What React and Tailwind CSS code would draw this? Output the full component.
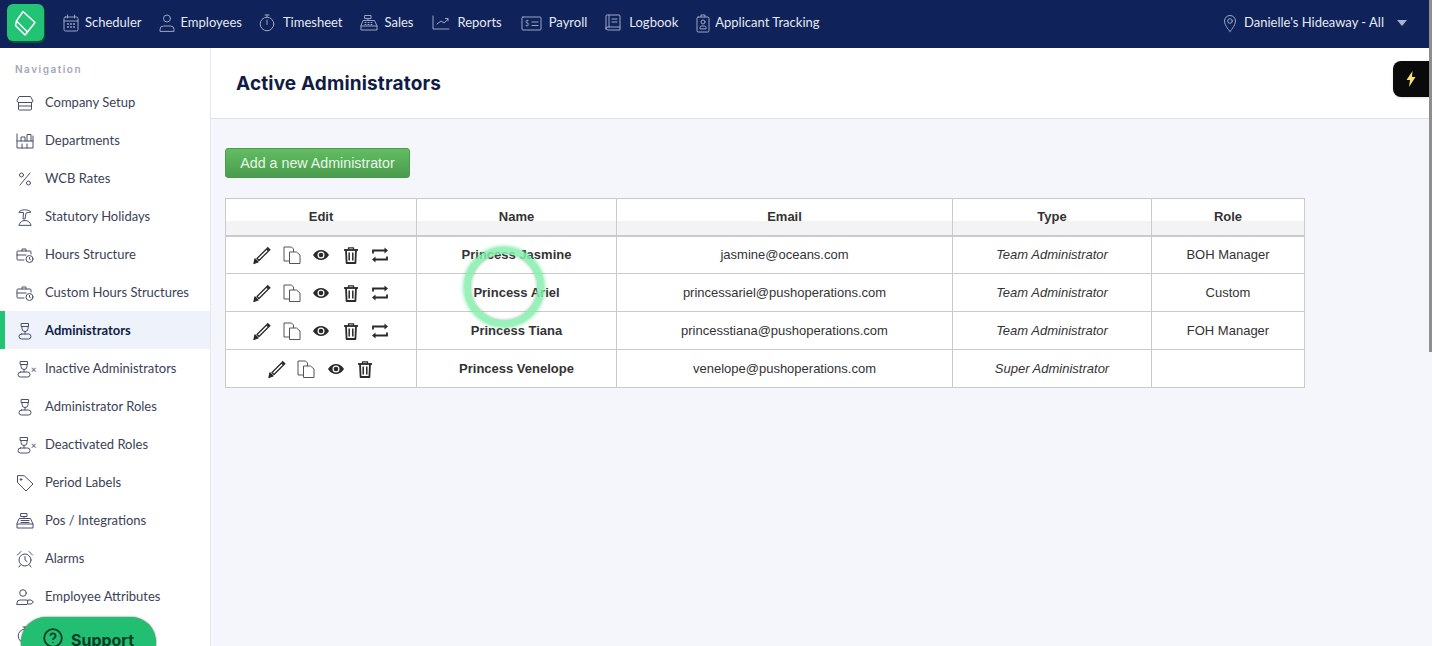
import React from 'react';

const Stroke = ({ children, className = '', w = 20, h = 20, vb = '0 0 20 20', sw = 1 }) => (
  <svg width={w} height={h} viewBox={vb} fill="none" stroke="currentColor" strokeWidth={sw} strokeLinecap="round" strokeLinejoin="round" className={className}>
    {children}
  </svg>
);

const CalendarIcon = () => (
  <Stroke>
    <rect x="3" y="4" width="14" height="14" rx="1.500" />
    <path d="M3 8h14M6.500 2v3M13.500 2v3" />
    <path d="M6.500 11h1M9.500 11h1M12.500 11h1M6.500 14h1M9.500 14h1M12.500 14h1" strokeWidth="1.300" />
  </Stroke>
);
const PersonIcon = () => (
  <Stroke>
    <circle cx="10" cy="5.500" r="3.500" />
    <path d="M3 18v-1.500a3.500 3.500 0 0 1 3.500-3.500h7a3.500 3.500 0 0 1 3.500 3.500V18z" />
  </Stroke>
);
const TimerIcon = () => (
  <Stroke>
    <circle cx="10" cy="11" r="6.800" />
    <path d="M10 7v4.500M8 2h4M10 2v2" />
  </Stroke>
);
const RegisterIcon = () => (
  <Stroke>
    <path d="M6 2.500h6v3H6zM9 5.500v2M4.500 7.500h11L18 13v4H2v-4z" />
    <path d="M2 13h16M6 9.500h1M9 9.500h1M12 9.500h1M6 11.500h1M9 11.500h1M12 11.500h1" />
  </Stroke>
);
const ChartIcon = () => (
  <Stroke>
    <path d="M2 3v13h16M6 11l4-3 3 2 4-4M14.500 5.500H17V8" />
  </Stroke>
);
const ChequeIcon = () => (
  <Stroke w={21} vb="0 0 21 20">
    <rect x="1" y="4" width="19" height="13" rx="1" />
    <path d="M11 9h6M11 12.500h6" />
    <text x="4" y="13" fontSize="7" fill="currentColor" stroke="none" fontFamily="Lato">$</text>
  </Stroke>
);
const BookIcon = () => (
  <Stroke>
    <path d="M3 16V3a1 1 0 0 1 1-1h12a1 1 0 0 1 1 1v14H5a2 2 0 0 1-2-2zM6 2v12M3 15a1.500 1.500 0 0 1 2-1h12" />
    <path d="M9 6h5M9 9h5" />
  </Stroke>
);
const ClipboardIcon = () => (
  <Stroke>
    <rect x="4" y="4" width="12" height="15" rx="1.200" />
    <path d="M8 4V2h4v2" />
    <circle cx="10" cy="9" r="2" />
    <path d="M7 15.500v-1a1.500 1.500 0 0 1 1.500-1.500h3a1.500 1.500 0 0 1 1.500 1.500v1z" />
  </Stroke>
);
const PinIcon = () => (
  <Stroke>
    <path d="M10 18.500S4.500 12.500 4.500 8a5.500 5.500 0 0 1 11 0c0 4.500-5.500 10.500-5.500 10.500z" />
    <circle cx="10" cy="8" r="2.300" />
  </Stroke>
);

const StoreIcon = () => (
  <Stroke>
    <path d="M4.500 3.500h11L18 8a2 2 0 0 1-2 1.500H4A2 2 0 0 1 2 8z" />
    <path d="M3.500 9.500V16a1 1 0 0 0 1 1h11a1 1 0 0 0 1-1V9.500M3.500 13h13" />
  </Stroke>
);
const DeptIcon = () => (
  <Stroke>
    <path d="M2 3v14h16V5M2 10h16M6 10V6h4v4M12 10V3.500h4V10M7 17v-4M12 17v-4" />
  </Stroke>
);
const PercentIcon = () => (
  <Stroke>
    <path d="M15 4L5 16" />
    <circle cx="6.500" cy="6" r="2" />
    <circle cx="13.500" cy="14" r="2" />
  </Stroke>
);
const BeachIcon = () => (
  <Stroke>
    <path d="M4 5c2-3 9-3 12 0l-5 1-1 6H8l.5-6zM4 18c1-3 3-4.500 6-4.500s5 1.500 6 4.500z" />
  </Stroke>
);
const BriefcaseClock = () => (
  <Stroke>
    <path d="M9 15H3a1 1 0 0 1-1-1V7a1 1 0 0 1 1-1h12a1 1 0 0 1 1 1v2M7 6V4h4v2M2 10h9" />
    <circle cx="14.500" cy="14" r="3.500" />
    <path d="M14.500 12.300V14l1 1" />
  </Stroke>
);
const AdminIcon = () => (
  <Stroke>
    <path d="M6.500 2.500h7v3h-7zM7 5.500v2a3 3 0 0 0 6 0v-2" />
    <rect x="4" y="13" width="12" height="5" rx="2.500" />
    <path d="M10 10.500V13" />
  </Stroke>
);
const AdminX = () => (
  <div className="relative -ml-[3px] h-[20px] w-[20px]">
    <AdminIcon />
    <span className="absolute -right-[3px] top-[5px] text-[10px] leading-none">×</span>
  </div>
);
const TagIcon = () => (
  <Stroke>
    <path d="M2.500 3v6.500L11 18l7-7-8.500-8z" />
    <circle cx="6" cy="6.500" r="0.800" fill="currentColor" />
  </Stroke>
);
const AlarmIcon = () => (
  <Stroke>
    <circle cx="10" cy="11" r="6" />
    <path d="M10 7.500V11l2 1.500M2.500 6L6 2.500M17.500 6L14 2.500M5.500 16l-1.500 2M14.500 16l1.500 2" />
  </Stroke>
);
const AttrIcon = () => (
  <Stroke>
    <circle cx="8" cy="6" r="3.300" />
    <path d="M2 17.500V16a3 3 0 0 1 3-3h6l2 .5M2 17.500h10" />
    <path d="M13 13h3l2.500 2-2.500 2h-3z" />
  </Stroke>
);
const PosIcon = () => (
  <Stroke>
    <path d="M6 2.500h6v3H6zM9 5.500v2M4.500 7.500h11L18 13v4H2v-4z" />
    <path d="M2 13h16M6 9.500h8M6 11.500h8" />
  </Stroke>
);

// row action icons
const PencilIcon = () => (
  <svg width="20" height="20" viewBox="0 0 20 20" fill="none" stroke="#2a2a2a" strokeWidth="1.300" strokeLinejoin="round">
    <path d="M5 13.500L14.500 4l2 2L7 15.500z" />
    <path d="M15 2.500l3 3" strokeWidth="2" />
    <path d="M2 18.500l1-4.500 3 3z" fill="#2a2a2a" />
  </svg>
);
const CopyIcon = () => (
  <svg width="20" height="20" viewBox="0 0 20 20" fill="#ffffff" stroke="#555555" strokeWidth="1" strokeLinejoin="round">
    <path d="M2 2h7.500l2 2v12H2z" />
    <path d="M7.500 7h7l3.500 3v8.500H7.500z" />
  </svg>
);
const EyeIcon = () => (
  <svg width="20" height="20" viewBox="0 0 20 20">
    <path d="M2 10c2-3.500 5-5 8-5s6 1.500 8 5c-2 3.500-5 5-8 5s-6-1.500-8-5z" fill="#2a2a2a" />
    <circle cx="10" cy="10" r="3.500" fill="#ffffff" />
    <circle cx="10" cy="10" r="2.300" fill="#2a2a2a" />
  </svg>
);
const TrashIcon = () => (
  <svg width="20" height="20" viewBox="0 0 20 20" fill="none" stroke="#2a2a2a" strokeWidth="1.800" strokeLinejoin="round">
    <path d="M3 5h14" />
    <path d="M7.500 5V2.800h5V5" strokeWidth="1.300" />
    <path d="M5 5l.6 13h8.800L15 5" />
    <path d="M8.200 7.500v8M11.800 7.500v8" strokeWidth="1.500" />
  </svg>
);
const SwapIcon = () => (
  <svg width="20" height="20" viewBox="0 0 20 20" fill="none" stroke="#2a2a2a" strokeWidth="1.800">
    <path d="M3 8.500V5.500h12" />
    <path d="M14.500 2.500L18 5.500l-3.500 3z" fill="#2a2a2a" stroke="none" />
    <path d="M17 11.500v3H5" />
    <path d="M5.500 11.500L2 14.500l3.500 3z" fill="#2a2a2a" stroke="none" />
  </svg>
);

const topLinks = [
  { label: 'Scheduler', Icon: CalendarIcon, link: 'gap-[4px] mr-[15px]' },
  { label: 'Employees', Icon: PersonIcon, link: 'gap-[4px] mr-[15px]' },
  { label: 'Timesheet', Icon: TimerIcon, link: 'gap-[6px] mr-[16px]' },
  { label: 'Sales', Icon: RegisterIcon, link: 'gap-[6px] mr-[18px]' },
  { label: 'Reports', Icon: ChartIcon, link: 'gap-[6px] mr-[19px]' },
  { label: 'Payroll', Icon: ChequeIcon, link: 'gap-[7px] mr-[16px]' },
  { label: 'Logbook', Icon: BookIcon, link: 'gap-[6px] mr-[15px]' },
  { label: 'Applicant Tracking', Icon: ClipboardIcon, link: 'gap-[2px]' },
];

const sideLinks = [
  { label: 'Company Setup', Icon: StoreIcon },
  { label: 'Departments', Icon: DeptIcon },
  { label: 'WCB Rates', Icon: PercentIcon },
  { label: 'Statutory Holidays', Icon: BeachIcon },
  { label: 'Hours Structure', Icon: BriefcaseClock },
  { label: 'Custom Hours Structures', Icon: BriefcaseClock },
  { label: 'Administrators', Icon: AdminIcon, active: true },
  { label: 'Inactive Administrators', Icon: AdminX },
  { label: 'Administrator Roles', Icon: AdminIcon },
  { label: 'Deactivated Roles', Icon: AdminX },
  { label: 'Period Labels', Icon: TagIcon },
  { label: 'Pos / Integrations', Icon: PosIcon },
  { label: 'Alarms', Icon: AlarmIcon },
  { label: 'Employee Attributes', Icon: AttrIcon },
  { label: '', Icon: TimerIcon },
];

const admins = [
  { name: 'Princess Jasmine', email: 'jasmine@oceans.com', type: 'Team Administrator', role: 'BOH Manager', swap: true },
  { name: 'Princess Ariel', email: 'princessariel@pushoperations.com', type: 'Team Administrator', role: 'Custom', swap: true },
  { name: 'Princess Tiana', email: 'princesstiana@pushoperations.com', type: 'Team Administrator', role: 'FOH Manager', swap: true },
  { name: 'Princess Venelope', email: 'venelope@pushoperations.com', type: 'Super Administrator', role: '', swap: false },
];

const cell = 'border border-[#c9cacd] p-0 text-center';

const App = () => {
  return (
    <div className="relative h-[646px] w-[1432px] overflow-hidden bg-white font-['Lato',sans-serif]">
      <header className="flex h-[48px] items-center bg-[#0f2259] pb-[3px] text-[13px] text-[#e6e9f2]">
        <div className="ml-[7px] mr-[17px] h-[37px] w-[37px] rounded-[6px] bg-[#22c375] shadow-[1px_2px_0_#0b5a30]">
          <svg width="37" height="37" viewBox="0 0 37 37" fill="none" stroke="#ffffff" strokeWidth="1.500" strokeLinejoin="round">
            <path d="M9.500 17L16 7.500 28 18.500 20.500 28z" />
            <path d="M9.500 17L8.500 21.500 18 31 20.500 28" />
          </svg>
        </div>
        {topLinks.map(({ label, Icon, link }) => (
          <a key={label} className={`flex items-center ${link}`}>
            <span className="text-[#9aa6c6]"><Icon /></span>
            <span className="whitespace-nowrap">{label}</span>
          </a>
        ))}
        <div className="ml-auto mr-[25px] flex items-center">
          <span className="mr-[4px] text-[#9aa6c6]"><PinIcon /></span>
          <span className="whitespace-nowrap">Danielle's Hideaway - All</span>
          <span className="ml-[13px] h-0 w-0 border-x-[5px] border-t-[6px] border-x-transparent border-t-[#aab4d0]" />
        </div>
      </header>

      <div className="flex h-[598px]">
        <aside className="h-full w-[211px] shrink-0 overflow-hidden border-r border-[#e6e7ee] bg-white">
          <div className="pl-[15px] pt-[15px] pb-[8px] font-['Inter',sans-serif] text-[10px] font-semibold leading-[12px] tracking-[1.500px] text-[#a4a8b5]">
            Navigation
          </div>
          {sideLinks.map(({ label, Icon, active }, i) => (
            <div
              key={i}
              className={`flex h-[38px] items-center border-l-[5px] pl-[10px] pt-[2px] text-[13px] ${active ? 'border-[#22c375] bg-[#edf2fb] font-bold text-[#111c44]' : 'border-transparent text-[#3a4256]'}`}
            >
              <span className="mr-[10px] flex w-[20px] justify-center text-[#4a5068]"><Icon /></span>
              {label && <span className="whitespace-nowrap">{label}</span>}
            </div>
          ))}
        </aside>

        <main className="min-w-0 flex-1 bg-[#f5f6fb]">
          <div className="flex h-[71px] items-center border-b border-[#e1e2e8] bg-white pl-[25px]">
            <h1 className="mt-[2px] font-['Inter',sans-serif] text-[19px] font-bold tracking-[0.150px] text-[#111c44]">Active Administrators</h1>
          </div>
          <div className="pl-[14px] pt-[29px] font-['Liberation_Sans',sans-serif] text-[13px] text-[#333333]">
            <button className="flex h-[30px] w-[185px] items-center justify-center rounded-[3px] border border-[#4d9a4d] bg-gradient-to-b from-[#62bd62] to-[#4a9c4d] pt-[2px] text-[14.250px] text-[#e8f5e8]">
              Add a new Administrator
            </button>
            <table className="mt-[20px] w-[1079px] table-fixed border-collapse">
              <colgroup>
                <col className="w-[191px]" />
                <col className="w-[200px]" />
                <col className="w-[336px]" />
                <col className="w-[199px]" />
                <col className="w-[153px]" />
              </colgroup>
              <thead>
                <tr className="h-[37px] bg-[linear-gradient(#ffffff_0,#ffffff_22px,#f3f3f3_22px)]">
                  {['Edit', 'Name', 'Email', 'Type', 'Role'].map((h) => (
                    <th key={h} className={`${cell} border-b-2 font-bold`}>{h}</th>
                  ))}
                </tr>
              </thead>
              <tbody className="bg-white">
                {admins.map((a) => (
                  <tr key={a.name} className="h-[38px]">
                    <td className={cell}>
                      <div className="flex items-center justify-center gap-[9.500px]">
                        <PencilIcon />
                        <CopyIcon />
                        <EyeIcon />
                        <TrashIcon />
                        {a.swap && <SwapIcon />}
                      </div>
                    </td>
                    <td className={`${cell} font-bold`}>{a.name}</td>
                    <td className={cell}>{a.email}</td>
                    <td className={`${cell} italic`}>{a.type}</td>
                    <td className={cell}>{a.role}</td>
                  </tr>
                ))}
              </tbody>
            </table>
          </div>
        </main>
      </div>

      {/* click highlight */}
      <div className="absolute left-[464px] top-[247px] h-[80px] w-[80px] rounded-full border-[7px] border-[#86efac]/85 shadow-[0_0_4px_#4ade80,inset_0_0_3px_rgba(110,110,110,0.5)]" />

      <div className="absolute right-[3px] top-[61px] flex h-[36px] w-[36px] items-center justify-center rounded-l-[8px] bg-[#0a0a0a] shadow">
        <svg width="10" height="16" viewBox="0 0 10 16"><path d="M6.500 0L0.500 9h3.500L3 16l6.500-10H6z" fill="#f7df7a" /></svg>
      </div>

      <div className="absolute left-[21px] top-[617px] flex h-[50px] w-[135px] items-start justify-center gap-[8px] rounded-[25px] bg-[#22bf72] pt-[11px] font-['Inter',sans-serif] text-[16px] font-bold text-[#0d3d26] shadow-[0_0_2px_#555]">
        <svg width="20" height="20" viewBox="0 0 20 20" fill="none" stroke="currentColor" strokeWidth="1.800"><circle cx="10" cy="10" r="8.800" /><path d="M7.500 7.800a2.500 2.500 0 1 1 3.700 2.200c-.8.500-1.200 1-1.200 2M10 14v1" /></svg>
        Support
      </div>

      <div className="absolute right-0 top-0 h-[352px] w-[3px] bg-[#8e8e8e]" />
    </div>
  );
};

export default App;
